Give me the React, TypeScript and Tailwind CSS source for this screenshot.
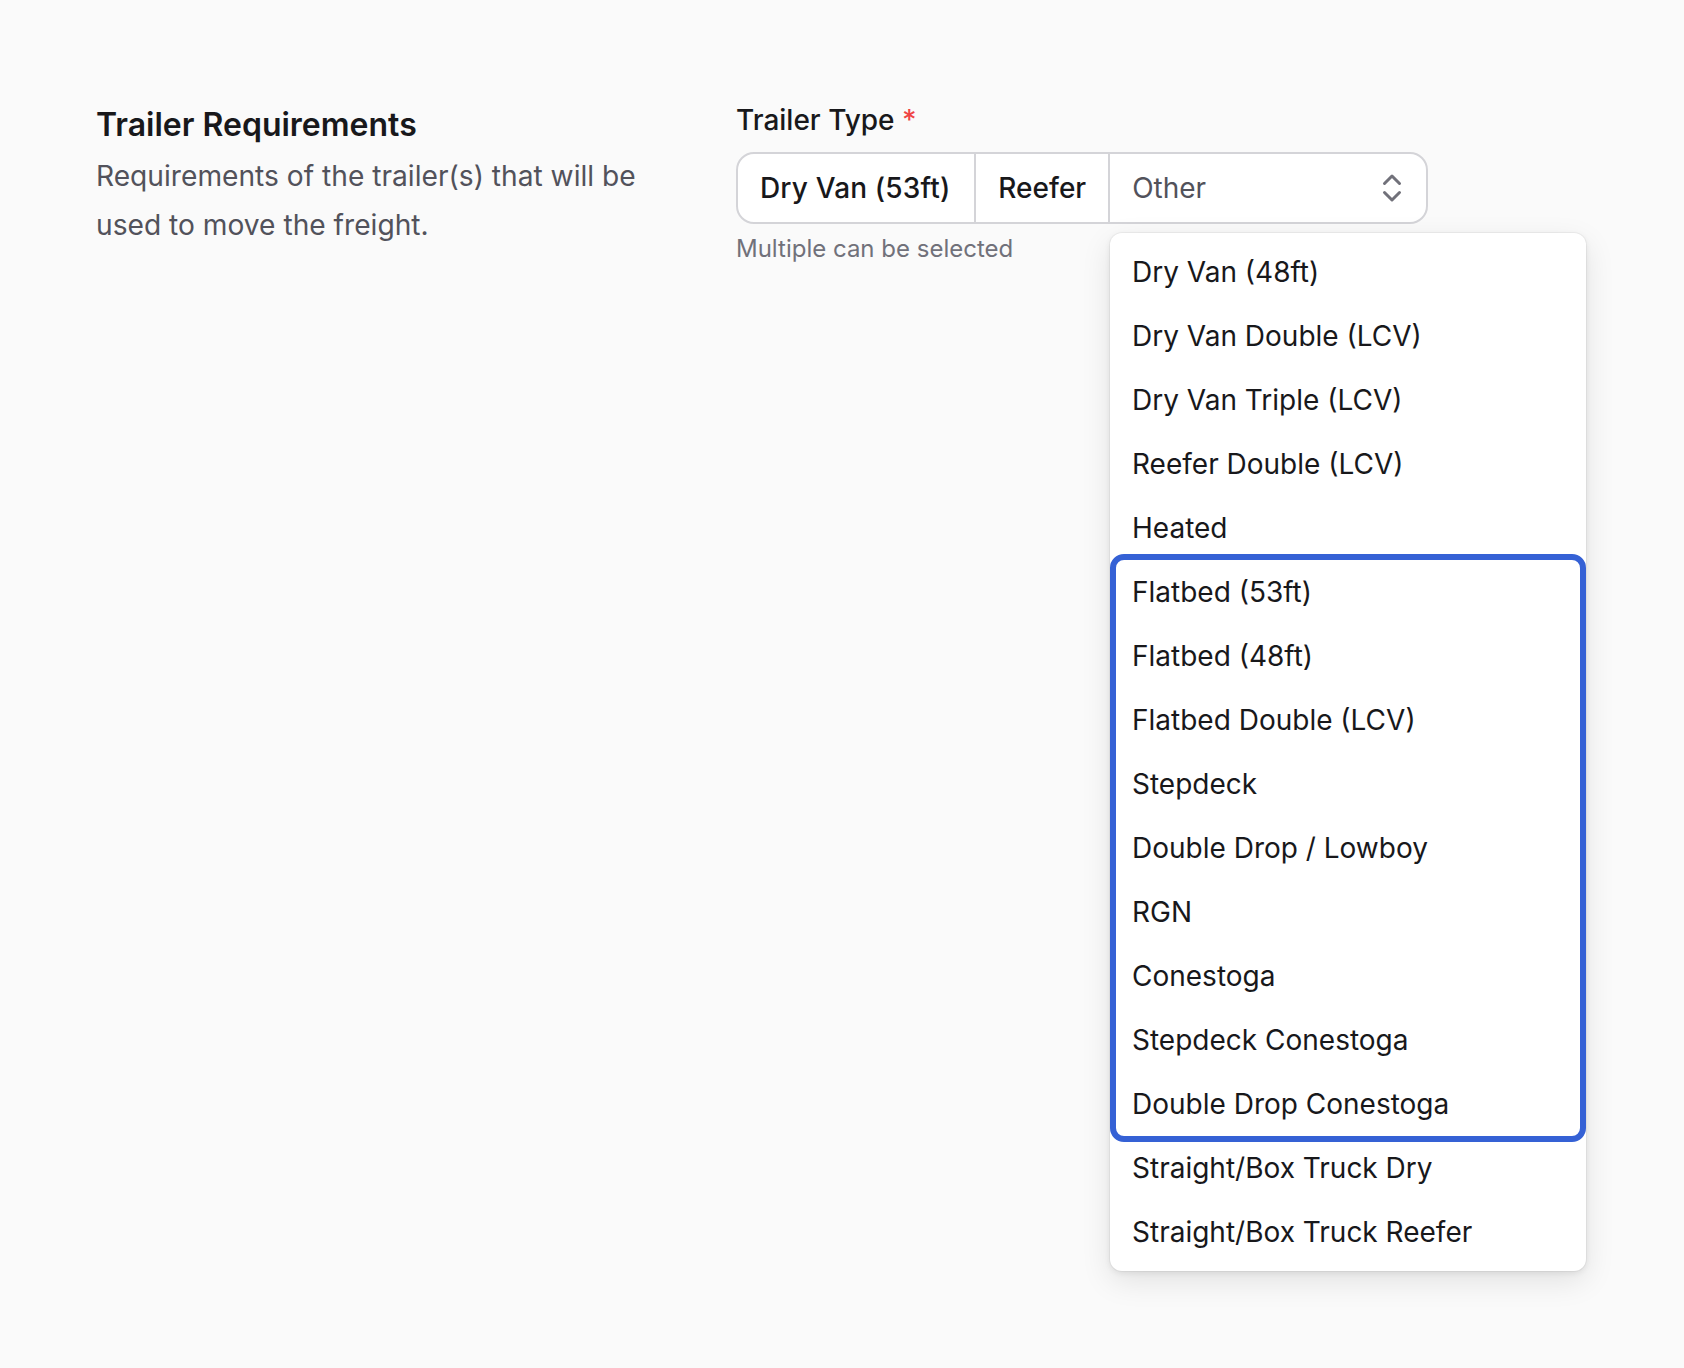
import { ChevronsUpDown } from 'lucide-react'

const BEFORE = ['Dry Van (48ft)', 'Dry Van Double (LCV)', 'Dry Van Triple (LCV)', 'Reefer Double (LCV)', 'Heated']
const HIGHLIGHTED = [
  'Flatbed (53ft)',
  'Flatbed (48ft)',
  'Flatbed Double (LCV)',
  'Stepdeck',
  'Double Drop / Lowboy',
  'RGN',
  'Conestoga',
  'Stepdeck Conestoga',
  'Double Drop Conestoga',
]
const AFTER = ['Straight/Box Truck Dry', 'Straight/Box Truck Reefer']

function Option({ label }: { label: string }) {
  return <div className="flex h-[64px] items-center pl-[22px] text-[28px] text-[#18181b]">{label}</div>
}

export default function App() {
  return (
    <div className="min-h-[1368px] bg-[#fafafa] pl-[96px] pt-[96px] font-['Inter',sans-serif]">
      <div className="flex">
        <div className="w-[640px] pt-[7px]">
          <h2 className="text-[32px] font-semibold leading-[44px] text-[#18181b]">Trailer Requirements</h2>
          <p className="mt-[5px] w-[560px] text-[28.16px] leading-[48.5px] text-[#52525b]">
            Requirements of the trailer(s) that will be used to move the freight.
          </p>
        </div>
        <div className="relative w-[692px]">
          <div className="text-[28px] font-medium leading-[48px] text-[#18181b]">
            Trailer Type <span className="text-[#ef4444]">*</span>
          </div>
          <div className="mt-[8px] flex h-[72px] items-stretch rounded-[18px] border-2 border-[#d4d4d8] bg-white text-[28px]">
            <div className="flex items-center border-r-2 border-[#d4d4d8] pl-[22px] pr-[24px] font-medium tracking-[0.15px] text-[#18181b]">Dry Van (53ft)</div>
            <div className="flex items-center border-r-2 border-[#d4d4d8] pl-[22px] pr-[22px] font-medium text-[#18181b]">Reefer</div>
            <div className="flex flex-1 items-center justify-between pl-[22px] pr-[16px] text-[#52525b]">
              <span>Other</span>
              <ChevronsUpDown className="h-[36px] w-[36px] text-[#71717a]" strokeWidth={2} />
            </div>
          </div>
          <div className="mt-[7px] text-[24px] leading-[36px] text-[#71717a]">Multiple can be selected</div>
          <div className="absolute left-[374px] top-[137px] w-[476px] rounded-[12px] bg-white py-[7px] shadow-[0_0_0_1px_rgba(0,0,0,0.04),0_10px_30px_rgba(0,0,0,0.1),0_2px_6px_rgba(0,0,0,0.08)]">
            {BEFORE.map((o) => (
              <Option key={o} label={o} />
            ))}
            <div className="relative">
              {HIGHLIGHTED.map((o) => (
                <Option key={o} label={o} />
              ))}
              <div className="absolute inset-x-0 -inset-y-[6px] rounded-[14px] border-[6px] border-[#3561d5]" />
            </div>
            {AFTER.map((o) => (
              <Option key={o} label={o} />
            ))}
          </div>
        </div>
      </div>
    </div>
  )
}
